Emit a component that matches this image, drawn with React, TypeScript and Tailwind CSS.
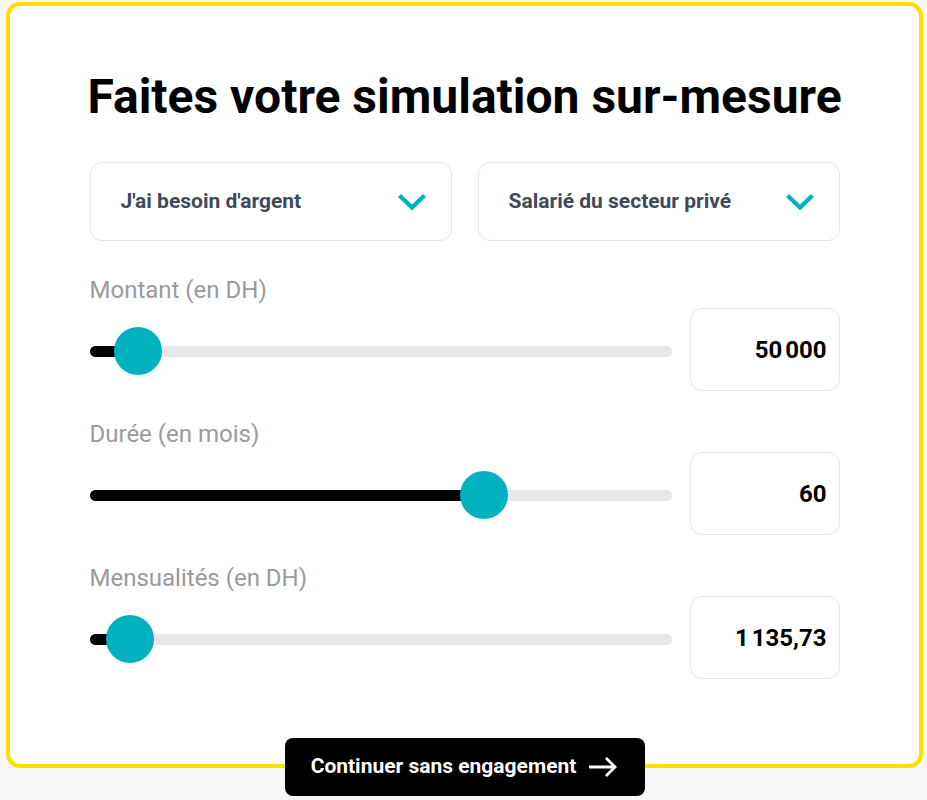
import React from 'react';

type Row = {
  label: string;
  value: string;
  pos: number; // thumb centre, px from track start
};

const ROWS: Row[] = [
  { label: 'Montant (en DH)', value: '50\u202f000', pos: 48 },
  { label: 'Durée (en mois)', value: '60', pos: 394 },
  { label: 'Mensualités (en DH)', value: '1\u202f135,73', pos: 40 },
];

const Chevron = () => (
  <svg width="30" height="18" viewBox="0 0 30 18" fill="none">
    <path d="M2.5 2.5L15 14.5L27.5 2.5" stroke="#00b2bf" strokeWidth="4.2" />
  </svg>
);

const Select = ({ label }: { label: string }) => (
  <div className="flex h-[79px] flex-1 items-center justify-between rounded-xl border border-[#e6e6e6] bg-white pl-[30px] pr-[24px]">
    <span className="text-[21px] font-bold text-[#3f4a5b]">{label}</span>
    <Chevron />
  </div>
);

const SliderRow = ({ row }: { row: Row }) => (
  <div className="flex flex-col">
    <div className="text-[24px] leading-[28px] text-[#9a9a9f]">{row.label}</div>
    <div className="mt-[4px] flex items-center gap-[18px]">
      <div className="relative mt-[3px] h-[11px] flex-1 rounded-full bg-[#e6e6eb]">
        <div className="absolute left-0 top-0 h-full rounded-full bg-black" style={{ width: row.pos }} />
        <div
          className="absolute top-1/2 h-[48px] w-[48px] -translate-y-1/2 rounded-full bg-[#00b2bf]"
          style={{ left: row.pos - 24 }}
        />
      </div>
      <div className="flex h-[83px] w-[150px] items-center justify-end rounded-xl border border-[#e6e6e6] bg-white pr-[12px]">
        <span className="text-[24px] font-bold text-black">{row.value}</span>
      </div>
    </div>
  </div>
);

export default function App() {
  return (
    <div className="min-h-screen bg-[#f7f7f7] pl-[6px] pr-[4px] pt-[2px]" style={{ fontFamily: 'Roboto, "Liberation Sans", sans-serif' }}>
      <div className="relative rounded-[14px] border-4 border-[#ffdf00] bg-white pb-[85px] pt-[63px]">
        <div className="mx-auto w-[750px]">
          <h1 className="-mx-[20px] whitespace-nowrap text-center text-[48px] font-bold leading-[56px] text-black">
            Faites votre simulation sur-mesure
          </h1>
          <div className="mt-[37px] flex gap-[26px]">
            <Select label="J'ai besoin d'argent" />
            <Select label="Salarié du secteur privé" />
          </div>
          <div className="mt-[35px] flex flex-col gap-[29px]">
            {ROWS.map((r) => (
              <SliderRow key={r.label} row={r} />
            ))}
          </div>
        </div>
        <button className="absolute bottom-[-32px] left-1/2 flex h-[58px] w-[360px] -translate-x-1/2 items-center justify-center gap-[12px] rounded-lg bg-black text-[21px] font-bold text-white">
          <span>Continuer sans engagement</span>
          <svg width="30" height="22" viewBox="0 0 30 22" fill="none">
            <path d="M1 11H27M18 2L27 11L18 20" stroke="white" strokeWidth="2.8" />
          </svg>
        </button>
      </div>
      <div className="h-[40px]" />
    </div>
  );
}
